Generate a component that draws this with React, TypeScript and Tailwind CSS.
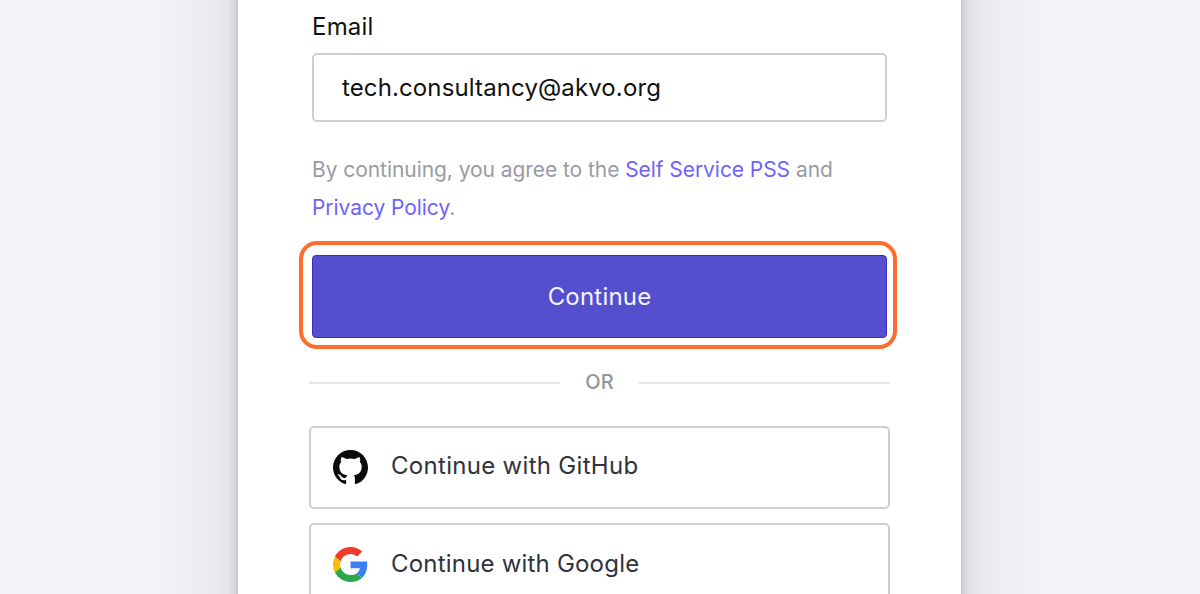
function GitHubMark() {
  return (
    <svg viewBox="0 0 16 16" className="block size-[35px] shrink-0" fill="#0b0b0b" aria-hidden="true">
      <path d="M8 0C3.58 0 0 3.58 0 8c0 3.54 2.29 6.53 5.47 7.59.4.07.55-.17.55-.38 0-.19-.01-.82-.01-1.49-2.01.37-2.53-.49-2.69-.94-.09-.23-.48-.94-.82-1.13-.28-.15-.68-.52-.01-.53.63-.01 1.08.58 1.23.82.72 1.21 1.87.87 2.33.66.07-.52.28-.87.51-1.07-1.78-.2-3.64-.89-3.64-3.95 0-.87.31-1.59.82-2.15-.08-.2-.36-1.02.08-2.12 0 0 .67-.21 2.2.82.64-.18 1.32-.27 2-.27s1.36.09 2 .27c1.53-1.04 2.2-.82 2.2-.82.44 1.1.16 1.92.08 2.12.51.56.82 1.27.82 2.15 0 3.07-1.87 3.75-3.65 3.95.29.25.54.73.54 1.48 0 1.07-.01 1.93-.01 2.2 0 .21.15.46.55.38A8.01 8.01 0 0 0 16 8c0-4.42-3.58-8-8-8z" />
    </svg>
  );
}

function GoogleMark() {
  return (
    <svg viewBox="0 0 48 48" className="block size-[35px] shrink-0" aria-hidden="true">
      <path fill="#F03A2A" d="M24 9.5c3.54 0 6.71 1.22 9.21 3.6l6.85-6.85C35.9 2.38 30.47 0 24 0 14.62 0 6.51 5.38 2.56 13.22l7.98 6.19C12.43 13.72 17.74 9.5 24 9.5z" />
      <path fill="#3B7FF5" d="M46.98 24.55c0-1.57-.15-3.09-.38-4.55H24v9.02h12.94c-.58 2.96-2.26 5.48-4.78 7.18l7.73 6c4.51-4.18 7.09-10.36 7.09-17.65z" />
      <path fill="#FBBC05" d="M10.53 28.59c-.48-1.45-.76-2.99-.76-4.59s.27-3.14.76-4.59l-7.98-6.19C.92 16.46 0 20.12 0 24c0 3.88.92 7.54 2.56 10.78l7.97-6.19z" />
      <path fill="#2BA84C" d="M24 48c6.48 0 11.93-2.13 15.89-5.81l-7.73-6c-2.15 1.45-4.92 2.3-8.16 2.3-6.26 0-11.57-4.22-13.47-9.91l-7.98 6.19C6.51 42.62 14.62 48 24 48z" />
    </svg>
  );
}

export default function App() {
  return (
    <div className="flex h-[594px] w-full justify-center overflow-hidden bg-[#f1f3f7] font-['Inter',sans-serif]">
      <main className="-mt-[120px] ml-[-1px] h-[860px] w-[723px] shrink-0 bg-white px-[71px] pt-[120px] shadow-[0_0_9px_rgba(0,0,0,0.24),0_0_80px_rgba(0,0,0,0.14)]">
        <div className="px-[3px]">
          <label htmlFor="email" className="block h-[53px] pt-[11px] text-2xl leading-8 font-[430] tracking-[0.2px] text-[#111]">
            Email
          </label>
          <input
            id="email"
            type="email"
            defaultValue="tech.consultancy@akvo.org"
            className="block h-[69px] w-full rounded-[5px] border-2 border-[#cecece] px-7 pb-px text-2xl tracking-[0.12px] text-[#111] outline-none"
          />
          <p className="mt-[29px] text-[21px] leading-[38px] tracking-[-0.06px] text-[#989ba3]">
            By continuing, you agree to the <a className="text-[#6c63ff]">Self Service PSS</a> and
            <br />
            <a className="text-[#6c63ff]">Privacy Policy</a>.
          </p>
        </div>
        <div className="-mr-[7px] -ml-[10px] mt-[14px] h-[108px] rounded-[18px] border-[4.5px] border-[#ff6c2c] py-[10px] pr-[6px] pl-[9px]">
          <button className="h-[83px] w-full rounded-[4px] border border-[#3a2bc8] bg-[#554ecf] text-2xl tracking-[0.2px] text-[#f4f4ff]">
            Continue
          </button>
        </div>
        <div className="mt-[16px] flex h-[34px] items-center gap-[25px] text-xl font-medium text-[#92959d]">
          <span className="mt-px h-[2px] flex-1 bg-[#e6e6e6]" />
          <span>OR</span>
          <span className="mt-px h-[2px] flex-1 bg-[#e6e6e6]" />
        </div>
        <div className="mt-[27px] flex flex-col gap-[14px]">
          <button className="flex h-[83px] items-center gap-[23px] rounded-[5px] border-2 border-[#cecece] px-[22px] text-2xl tracking-[0.3px] text-[#30323d]">
            <GitHubMark />
            <span className="pb-[3px]">Continue with GitHub</span>
          </button>
          <button className="flex h-[83px] items-center gap-[23px] rounded-[5px] border-2 border-[#cecece] px-[22px] text-2xl tracking-[0.2px] text-[#30323d]">
            <GoogleMark />
            <span className="pb-px">Continue with Google</span>
          </button>
        </div>
      </main>
    </div>
  );
}
